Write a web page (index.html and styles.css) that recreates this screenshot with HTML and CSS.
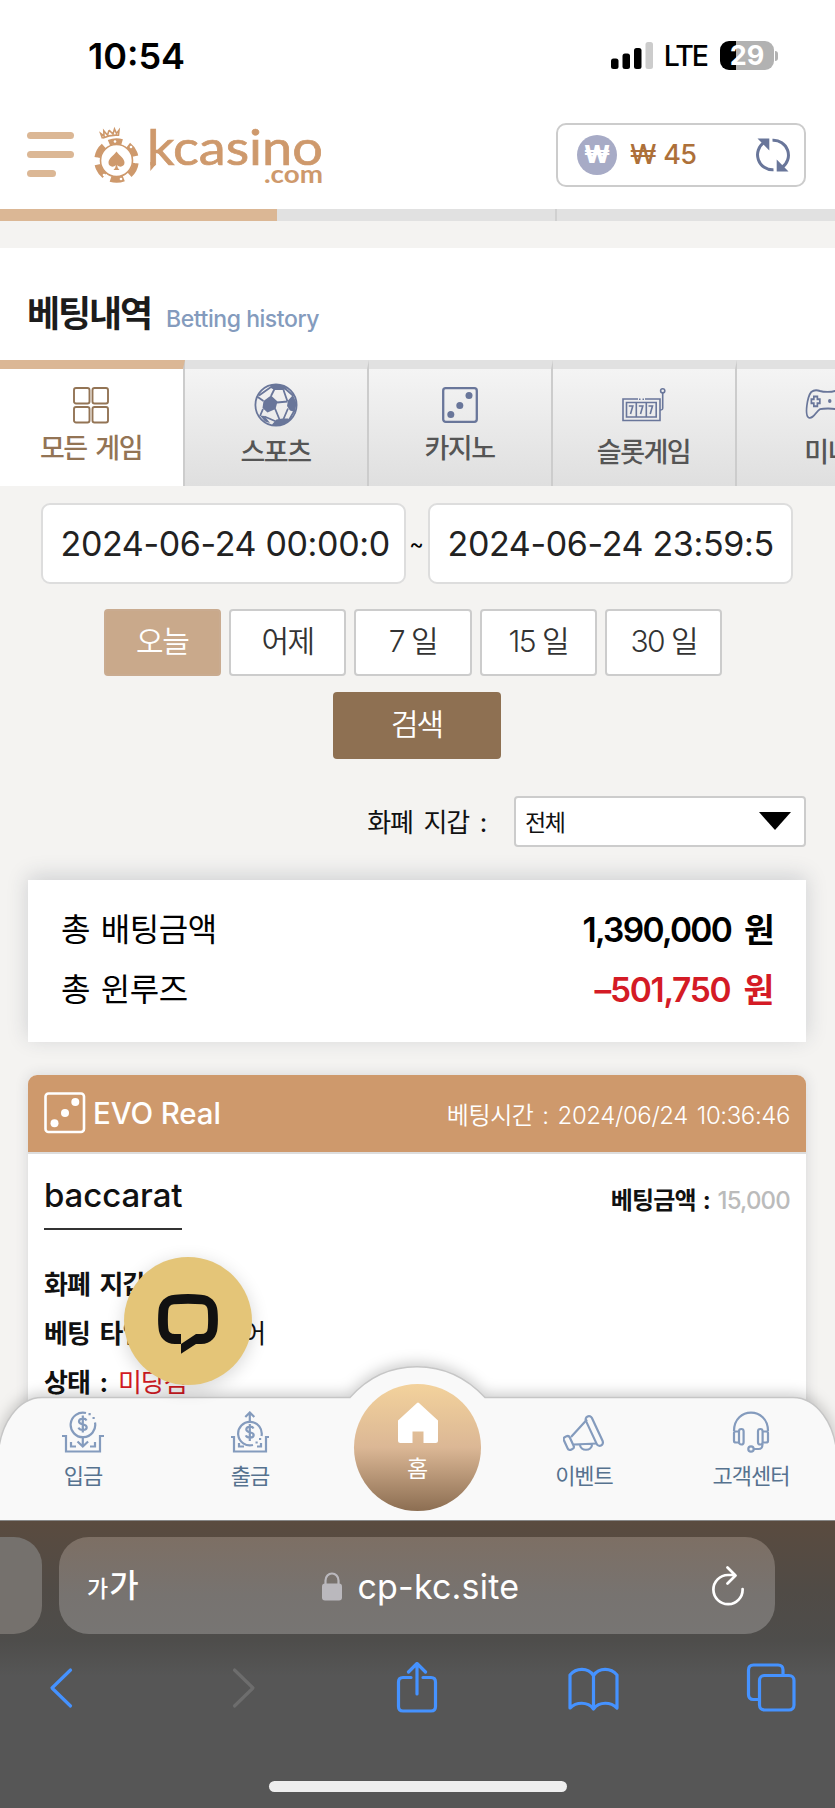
FILE: index.html
```html
<!DOCTYPE html>
<html lang="ko">
<head>
<meta charset="utf-8">
<title>베팅내역</title>
<link rel="stylesheet" href="styles.css">
</head>
<body>
<div class="screen">
  <div class="status">
    <span class="clock">10:54</span>
    <div class="status-right">
      <svg class="signal" width="42" height="28" viewBox="0 0 42 28"><rect x="0" y="16.500" width="7.500" height="10.500" rx="2.500"/><rect x="11.500" y="11.500" width="7.500" height="15.500" rx="2.500"/><rect x="23" y="6" width="7.500" height="21" rx="2.500"/><rect x="34.500" y="0" width="7.500" height="27" rx="2.500" fill="#ccc"/></svg>
      <span class="lte">LTE</span>
      <span class="battery">29</span>
      <span class="battery-tip"></span>
    </div>
  </div>

  <header class="header">
    <div class="menu"><i></i><i></i><i class="short"></i></div>
    <svg class="logo" width="232" height="60" viewBox="0 0 232 60">
      <g fill="none" stroke="#ce996c">
        <circle cx="23.500" cy="35.500" r="16" stroke-width="1.600"/>
        <circle cx="23.500" cy="35.500" r="19.300" stroke-width="6" stroke-dasharray="13.300 6.910" transform="rotate(-113 23.500 35.500)"/>
      </g>
      <g fill="#fff"><circle cx="22" cy="16.500" r="1.300"/><circle cx="38" cy="22" r="1.300"/><circle cx="42.500" cy="37" r="1.300"/><circle cx="28" cy="54" r="1.300"/><circle cx="11" cy="50" r="1.300"/><circle cx="4.500" cy="34" r="1.300"/></g>
      <path d="M23.500 26.500c3 4.500 8 6.500 8 11.300 0 4-5 5.200-7.300 2.200.2 2 .6 3.500 2.300 5h-6c1.700-1.500 2.100-3 2.300-5-2.300 3-7.300 1.800-7.300-2.200 0-4.800 5-6.800 8-11.300z" fill="#ce996c"/>
      <path d="M9.500 13.500l-1.800-5 3.300 2.500-.2-5.200 3.700 4.500 1.500-5M10 13Q17 9.500 25.500 10.200l.5-5-2.500 3.300-2-4.500-1.500 5-4-3.800" fill="none" stroke="#ce996c" stroke-width="1.600"/>
      <text class="logo-name" x="54" y="39.500" textLength="176" lengthAdjust="spacingAndGlyphs">kcasino</text>
      <path d="M57.300 37h4.700v3.500l-4.700 5.500z" fill="#ce996c"/>
      <text class="logo-com" x="171" y="57.500" textLength="59" lengthAdjust="spacingAndGlyphs">.com</text>
    </svg>
    <div class="wallet">
      <span class="won">₩</span>
      <span class="amount">₩ 45</span>
      <svg width="36" height="36" viewBox="0 0 36 36" fill="none" stroke="#69769a" stroke-width="3"><path d="M18.500 32.800A15 15 0 0 1 9 5.500M17.500 3.200A15 15 0 0 1 27 30.500"/><path d="M2.500 1.500h11.800v12zM33.500 34.500H21.700v-12z" fill="#69769a" stroke="none"/></svg>
    </div>
  </header>

  <div class="topbar"><i class="on"></i><i></i></div>

  <main class="page">
    <div class="title"><h1>베팅내역</h1><span>Betting history</span></div>
    <nav class="tabs">
      <a class="tab active">
        <svg width="36" height="44" viewBox="0 0 36 44" fill="none" stroke="#937455" stroke-width="1.900"><rect x="1" y="5" width="15.500" height="15.500" rx="2"/><rect x="19.500" y="5" width="15.500" height="15.500" rx="2"/><rect x="1" y="24" width="15.500" height="15.500" rx="2"/><rect x="19.500" y="24" width="15.500" height="15.500" rx="2"/></svg>
        <span>모든 게임</span></a>
      <a class="tab low">
        <svg width="44" height="44" viewBox="0 0 44 44" fill="none" stroke="#69769a" stroke-width="1.800"><circle cx="22" cy="22" r="20.600"/><path d="M9.500 18l7.500-5.500 6.500 6-2 7.500-8 3.500-5-4.500zM17 2h12l4 3.500-3.500 1.500h-9L16 4.500zM34 17.500l5-5.500 3.500 8-1.500 9-5-1.500-3-4.500zM22.500 36.500l6-1h5.500l2 1.500-6 4.500-10 1.500-2-1.500zM6 32.500l4.500.5 5.500 7-5-1.500z" fill="#69769a" stroke="none"/><path d="M17 13l3.500-7M23 19.500l10.500-1M33.500 18.500L29.500 7M21 25.500l4.500 11M34 25.500L29.500 36M9.500 18L3 13.500M9 26L6 33M31 5.500l8.500 7.500M35 37l5.500-9.500M10.500 33.500L22 38.500M5 12.500L17 4"/></svg>
        <span>스포츠</span></a>
      <a class="tab">
        <svg width="36" height="44" viewBox="0 0 36 44"><rect x="1.200" y="5.200" width="33.600" height="33.600" rx="2.500" fill="none" stroke="#69769a" stroke-width="2.300"/><g fill="#69769a"><circle cx="27" cy="12.500" r="3.500"/><circle cx="17.800" cy="22.500" r="3.500"/><circle cx="8.800" cy="31.500" r="3.500"/></g></svg>
        <span>카지노</span></a>
      <a class="tab low">
        <svg width="44" height="44" viewBox="0 0 44 44" fill="none" stroke="#69769a" stroke-width="1.600"><path d="M16 16H1v21.500h37V16H23"/><path d="M4.500 19.500h29.700V34H4.500zM14.300 19.500V34M24.300 19.500V34M17 16.300h1.500M20.500 16.300H22M38 27c2.500 0 2.700-.5 2.700-2V10"/><circle cx="40.700" cy="7.800" r="2.100"/><path d="M6.800 23h4l-2.300 8M16.800 23h4l-2.300 8M26.500 23h4l-2.300 8"/></svg>
        <span>슬롯게임</span></a>
      <a class="tab low">
        <svg width="46" height="44" viewBox="0 0 52 44" preserveAspectRatio="none" fill="none" stroke="#69769a" stroke-width="1.900"><path d="M7 9c4-3 7-2 10-1 4 1.200 13 1.200 17 0 4-1.200 7-2 10 1 4 5 7 22 4 25-5 3-10-7-13-7.800-4-1-14-1-18 0-4 1.500-8 10.800-13 8.300C-.5 32 2.500 14 7 9z"/><path d="M10 13.500h4v2.800h2.800v4H14v2.900h-4v-2.900H7.200v-4H10z"/><circle cx="28" cy="18" r="1"/><circle cx="38" cy="18" r="3"/></svg>
        <span>미니</span></a>
    </nav>

    <section class="filters">
      <div class="dates"><div class="date">2024-06-24 00:00:0</div><span class="tilde">~</span><div class="date">2024-06-24 23:59:5</div></div>
      <div class="ranges"><button class="range sel">오늘</button><button class="range">어제</button><button class="range">7 일</button><button class="range">15 일</button><button class="range">30 일</button></div>
      <button class="search">검색</button>
      <div class="currency"><label>화폐 지갑 :</label><div class="select"><span>전체</span><svg width="32" height="18" viewBox="0 0 32 18"><path d="M0 0h32L16 18z"/></svg></div></div>
    </section>

    <section class="summary">
      <div><span>총 배팅금액</span><b>1,390,000 원</b></div>
      <div><span>총 윈루즈</span><b class="neg">–501,750 원</b></div>
    </section>

    <section class="card">
      <div class="card-head">
        <svg width="42" height="42" viewBox="0 0 42 42"><rect x="1.500" y="1.500" width="38.500" height="38.500" rx="3" fill="none" stroke="#fff" stroke-width="2.600"/><g fill="#fff"><circle cx="31.300" cy="10" r="4"/><circle cx="21" cy="21" r="4"/><circle cx="10.500" cy="31.300" r="4"/></g></svg>
        <span class="vendor">EVO Real</span>
        <span class="time">베팅시간 : 2024/06/24 10:36:46</span>
      </div>
      <div class="card-top"><span class="game">baccarat</span><span class="bet"><b>베팅금액 :</b> 15,000</span></div>
      <div class="rows">
        <div><b>화폐 지갑 :</b> KRW</div>
        <div><b>베팅 타입 :</b> 플레이어</div>
        <div><b>상태 :</b> <em>미당첨</em></div>
      </div>
    </section>
  </main>

  <div class="dock">
    <svg class="dock-shape" width="835" height="180" viewBox="0 0 835 180"><path d="M-2 122C-2 82 20 57.500 42 57.500H350C368 37 391 26.700 417 26.700S466 37 485 57.500H793C815 57.500 837 82 837 122V182H-2z" fill="#f9f9f9" stroke="#c6c6c6" stroke-width="1.400"/></svg>
    <div class="dock-items">
      <a class="item"><svg width="42" height="42" viewBox="0 0 42 42" fill="none" stroke="#849bbd" stroke-width="2.200"><path d="M24 2A12.300 12.300 0 1 0 33 11.500" /><path d="M24.500 9.500c-1-2.500-7.500-2.500-7.500 1 0 4 7.700 1.700 7.700 5.800 0 3.600-7 3.500-8.200.4M20.800 4.500v17M20.800 25v10M15.500 30.500l5.300 5 5.300-5" /><path d="M0 25h4v15.500h34V25h4M9 31v4.500h5M33 31v4.500h-5M26.500 3.200h2.200M30.500 7h2.200"/></svg><span>입금</span></a>
      <a class="item"><svg width="42" height="42" viewBox="0 0 42 42" fill="none" stroke="#849bbd" stroke-width="2.200"><path d="M32.500 25A11.800 11.800 0 1 0 24 34"/><path d="M24.500 17.500c-1-2.500-7.200-2.500-7.200 1 0 3.700 7.400 1.700 7.400 5.500 0 3.400-6.700 3.300-7.900.4M20.800 13v17M20.800 11V2M16.300 6l4.500-4.500 4.500 4.500"/><path d="M2 26h3v14.500h32V26h3M10 32v3.500h5M32 32v3.500h-4M26.500 31.500h2.200M30 28h2.200"/></svg><span>출금</span></a>
      <a class="home"><svg width="42" height="42" viewBox="0 0 42 42"><path d="M20 1Q21 0 22 1L41 18.500V38.500Q41 41 38.500 41H26.500V29.500H15.500V41H3.500Q1 41 1 38.500V18.500z" fill="#fff"/></svg><span>홈</span></a>
      <a class="item"><svg width="42" height="42" viewBox="0 0 42 42" fill="none" stroke="#849bbd" stroke-width="2.200"><rect x="28" y="4" width="6.600" height="32" rx="3.300" transform="rotate(-25 31.200 20)"/><rect x="2.500" y="25" width="6.500" height="14" rx="2.500" transform="rotate(-25 5.700 32)"/><path d="M8 26L24 8.500M10.500 33.500L34 32.500M17 33.500c0 7 12 7 12 0"/></svg><span>이벤트</span></a>
      <a class="item"><svg width="42" height="42" viewBox="0 0 42 42" fill="none" stroke="#849bbd" stroke-width="2.200"><path d="M4 20C4-4.500 38-4.500 38 20M9 20.500H5.500C4 20.500 4 21 4 22v8c0 1 1 1.500 2 1.500h3M33 20.500h3.500c1.500 0 1.500.5 1.500 1.500v8c0 1-1 1.500-2 1.500h-3M32.500 33c0 4-1 5-4 5H24"/><rect x="9" y="18" width="4.600" height="15.500" rx="2.300"/><rect x="28" y="18" width="4.600" height="15.500" rx="2.300"/><circle cx="21" cy="38" r="2.700"/></svg><span>고객센터</span></a>
    </div>
  </div>

  <div class="chat"><svg width="60" height="60" viewBox="0 0 60 60"><path fill-rule="evenodd" fill="#111" d="M17 .7Q30-.7 43 .7C53 1.500 59 8 59.500 17Q60.300 26 59.500 33.500C59 43 53 50 43 50H38L23 59.800V50H17C7 50 1 43 .5 33.500Q-.3 26 .5 17C1 8 7 1.500 17 .7zM16 10.300Q10.500 10.700 10.200 16.500Q9.500 26 10.200 34Q10.500 40 17 40H23V50L38 40H43Q49.500 40 49.800 34Q50.500 26 49.800 16.500Q49.500 10.700 44 10.300Q30 9.300 16 10.300z"/></svg></div>

  <footer class="browser">
    <div class="urls">
      <div class="prev"></div>
      <div class="url">
        <span class="aa"><small>가</small>가</span>
        <span class="host"><svg width="20" height="29" viewBox="0 0 20 29"><path d="M3.500 13V8.500a6.500 7 0 0 1 13 0V13" fill="none" stroke="#bab8bd" stroke-width="2.200"/><rect y="11.500" width="20" height="17" rx="3" fill="#bab8bd"/></svg>cp-kc.site</span>
        <svg width="34" height="40" viewBox="0 0 34 40" fill="none" stroke="#fff" stroke-width="2.700" stroke-linecap="round" stroke-linejoin="round"><path d="M16.500 1.500l8 8-8 8M24 9H17A14.600 14.600 0 1 0 31.600 23"/></svg>
      </div>
    </div>
    <div class="tools">
      <svg width="52" height="52" viewBox="0 0 52 52"><path d="M35.500 8L17 26l18.500 18"/></svg>
      <svg class="dim" width="52" height="52" viewBox="0 0 52 52"><path d="M22.500 8L41 26 22.500 44"/></svg>
      <svg width="52" height="52" viewBox="-6 0 52 52"><path d="M15 15.500H7q-4.500 0-4.500 4.500v24.500q0 4.500 4.500 4.500h28q4.500 0 4.500-4.500V20q0-4.500-4.500-4.500h-8M21 32V2M12.500 10L21 1.500 29.500 10"/></svg>
      <svg width="52" height="52" viewBox="0 0 52 52"><path d="M26.500 13.500C20.500 5 9 6 3 13V46c6-6 17.500-7 23.500 1 6-8 17.500-7 23.500-1V13C44 6 32.500 5 26.500 13.500zV46"/></svg>
      <svg width="52" height="52" viewBox="-2 -1 52 52"><path d="M13 36.500H7.500q-5 0-5-5V7q0-5 5-5h24.500q5 0 5 5v5.500"/><rect x="13.500" y="12.500" width="34.500" height="34.500" rx="5"/></svg>
    </div>
    <div class="indicator"></div>
  </footer>
</div>
</body>
</html>
```

FILE: styles.css
```css
* { box-sizing: border-box; }
body { margin: 0; font-family: Inter, "Noto Sans CJK KR", sans-serif; color: #111; }
h1 { margin: 0; }
i, em { font-style: normal; }
b { font-weight: 600; }
button { font-family: inherit; margin: 0; padding: 0; }
svg { display: block; flex: none; }
.screen { position: relative; width: 835px; height: 1808px; overflow: hidden; background: #fff; display: flex; flex-direction: column; white-space: nowrap; }

.status { height: 104px; padding: 7px 57px 0 88px; display: flex; justify-content: space-between; align-items: center; color: #000; }
.clock { font-size: 36px; font-weight: 600; letter-spacing: 0; line-height: 104px; }
.status-right { display: flex; align-items: center; }
.lte { font-size: 28.500px; font-weight: 500; margin-left: 11px; letter-spacing: -2px; }
.battery { width: 54px; height: 29px; margin-left: 13px; border-radius: 9px; background: linear-gradient(90deg, #000 16px, #b2b2b2 16px); color: #fff; font-size: 27px; font-weight: 700; line-height: 29px; text-align: center; }
.battery-tip { width: 3px; height: 10px; margin-left: 1px; border-radius: 0 4px 4px 0; background: #b2b2b2; }

.header { height: 105px; padding: 0 29px 4px 27px; display: flex; align-items: center; }
.menu { width: 46.500px; display: flex; flex-direction: column; gap: 12.500px; }
.menu i { height: 6.700px; border-radius: 4px; background: #dbb795; }
.menu .short { width: 29px; }
.logo { margin-left: 19px; overflow: visible; }
.logo text { fill: #ce996c; font-family: Lato, sans-serif; }
.logo-name { font-size: 48px; font-weight: 400; stroke: #ce996c; stroke-width: .7px; }
.logo-com { font-size: 25px; font-weight: 700; }
.wallet { width: 250px; height: 64px; margin-left: auto; padding: 0 13px 0 19px; border: 2px solid #ccc; border-radius: 10px; display: flex; align-items: center; }
.won { width: 40px; height: 40px; border-radius: 50%; background: #a7abc6; color: #fff; font-size: 24px; font-weight: 900; line-height: 40px; text-align: center; }
.amount { flex: 1; margin-left: 13px; font-size: 27px; font-weight: 500; letter-spacing: -.7px; word-spacing: 1px; color: #ad7039; }

.topbar { flex: none; height: 12px; display: grid; grid-template-columns: 277px 280px; background: #e1e1e1; }
.topbar i { border-right: 2px solid #d0d0d0; }
.topbar .on { background: #dbb795; border-color: #dbb795; }
.page { flex: 1; min-height: 0; padding-top: 27px; background: #f4f3f1; overflow: hidden; }
.title { height: 112px; padding: 0 27px; background: #fff; display: flex; }
.title h1 { font-size: 36px; line-height: 133px; font-weight: 700; letter-spacing: -2.100px; color: #1c1c1c; }
.title span { margin-left: 15px; font-size: 23px; font-weight: 500; line-height: 143px; letter-spacing: -.45px; color: #849bbd; }

.tabs { height: 126px; display: flex; overflow: hidden; }
.tab { flex: none; width: 184px; padding: 14px 1px 0 0; border-top: 9px solid #e1e1e1; border-right: 2px solid #ccc; background: linear-gradient(#f4f4f4, #dfdfdf); display: flex; flex-direction: column; align-items: center; color: #555; }
.tab span { margin-top: 2px; font-size: 27px; line-height: 40px; font-weight: 500; letter-spacing: -1.500px; word-spacing: 3px; }
.tab.low span { margin-top: 6px; }
.tab.active { width: 185px; background: #fff; border-top-color: #dbb795; color: #937455; }

.filters { display: flex; flex-direction: column; align-items: center; padding-right: 2px; }
.dates { display: flex; align-items: center; margin-top: 17px; }
.date { width: 365px; height: 81px; padding: 0 18px; border: 2px solid #ddd; border-radius: 9px; background: #fff; font-size: 34px; letter-spacing: -.35px; line-height: 78px; color: #222; }
.tilde { width: 22px; text-align: center; font-size: 22px; color: #000; }
.ranges { display: flex; gap: 8px; margin: 25px 7px 0 0; }
.range { width: 117.400px; height: 67px; padding-bottom: 7px; border: 2px solid #ccc; border-radius: 4px; background: #fff; color: #333; font-size: 30px; font-weight: 350; letter-spacing: -1.500px; }
.range.sel { background: #c9a98b; border-color: #c9ab90; color: #fff; }
.search { width: 168px; height: 67px; margin-top: 16px; padding-bottom: 7px; border: 0; border-radius: 4px; background: #8e7052; color: #fff; font-size: 30px; font-weight: 350; letter-spacing: -2px; }
.currency { align-self: stretch; display: flex; justify-content: flex-end; align-items: center; margin: 37px 27px 0 0; color: #111; }
.currency label { font-size: 26px; letter-spacing: -1.300px; word-spacing: 5px; margin-right: 28px; padding-bottom: 3px; }
.select { width: 292px; height: 51px; padding: 0 13px 2px 9px; border: 2px solid #ccc; border-radius: 4px; background: #fff; display: flex; align-items: center; justify-content: space-between; font-size: 23px; letter-spacing: -1.300px; }

.summary { margin: 33px 29px 0 28px; height: 162px; padding: 20px 33px; background: #fff; box-shadow: 0 -4px 20px rgba(40, 50, 70, .18); color: #000; }
.summary div { display: flex; justify-content: space-between; line-height: 60px; }
.summary span { font-size: 32px; letter-spacing: -.4px; word-spacing: 2px; }
.summary b { font-size: 33.500px; letter-spacing: -1.700px; word-spacing: 6px; }
.summary .neg { color: #d41b25; letter-spacing: -1.300px; }

.card { margin: 33px 29px 0 28px; height: 500px; border-radius: 9px 9px 0 0; background: #fff; box-shadow: 0 0 14px rgba(40, 50, 70, .14); }
.card-head { height: 79px; padding: 0 16px 1px; border-bottom: 2px solid #ddd; border-radius: 9px 9px 0 0; background: #ce996c; background-clip: padding-box; color: #fff; display: flex; align-items: center; }
.vendor { margin-left: 7px; font-size: 29.500px; font-weight: 550; letter-spacing: -.1px; }
.time { margin-left: auto; font-size: 24px; font-weight: 350; letter-spacing: -.4px; word-spacing: 2.500px; }
.card-top { padding: 22px 16px 0; display: flex; justify-content: space-between; }
.game { height: 54px; border-bottom: 2px solid #333; font-size: 33px; line-height: 39px; font-weight: 500; letter-spacing: -.1px; }
.bet { font-size: 24px; line-height: 50px; font-weight: 500; color: #bbb; letter-spacing: -.8px; word-spacing: 2px; }
.bet b { color: #111; font-weight: 700; }
.rows { padding: 30px 16px 0; font-size: 26px; line-height: 49px; letter-spacing: -1px; word-spacing: 4.500px; }
.rows b { font-weight: 700; }
.rows em { color: #d41b25; }

.dock { position: absolute; left: 0; top: 1340px; width: 835px; height: 180px; overflow: hidden; }
.dock-shape { position: absolute; left: 0; top: 0; filter: drop-shadow(0 -3px 7px rgba(0, 0, 0, .2)); }
.dock-items { position: relative; display: grid; grid-template-columns: repeat(5, 167px); padding-top: 44px; }
.item { padding: 27px 1px 0 0; display: flex; flex-direction: column; align-items: center; color: #56728f; font-size: 22px; line-height: 32px; letter-spacing: -1px; }
.item span { margin-top: 7px; }
.home { justify-self: center; width: 127px; height: 127px; padding-top: 18px; border-radius: 50%; background: linear-gradient(#f3d29c, #dbb795 50%, #8c6e52); display: flex; flex-direction: column; align-items: center; color: #fff; font-size: 23px; line-height: 32px; }
.home span { margin-top: 9px; }

.chat { position: absolute; left: 124px; top: 1257px; width: 128px; height: 128px; border-radius: 50%; background: #e4c578; box-shadow: 0 4px 18px rgba(0, 0, 0, .16); display: flex; justify-content: center; padding-top: 37px; }

.browser { position: relative; height: 288px; border-top: 1px solid #888; background: linear-gradient(#5a4b3f, #504b46 70px, #4e4d4b 120px, #565656 155px); color: #fff; }
.urls { padding-top: 16px; display: flex; gap: 17px; }
.prev { width: 42px; height: 97px; border-radius: 0 28px 28px 0; background: #75716d; }
.url { width: 716px; height: 97px; padding: 0 30px 0 28px; border-radius: 30px; background: linear-gradient(#7d6f64, #777370 60%, #777573); display: flex; align-items: center; justify-content: space-between; }
.aa { padding-top: 4px; font-size: 32px; font-weight: 500; line-height: 50px; }
.aa small { font-size: 23px; margin-right: 1px; }
.host { display: flex; align-items: center; gap: 15px; padding-top: 2px; font-size: 34px; letter-spacing: .2px; margin-right: 8px; }
.tools { height: 52px; margin-top: 28px; padding: 0 39px 0 35px; display: flex; justify-content: space-between; }
.tools svg { fill: none; stroke: #4592ff; stroke-width: 3.200; stroke-linecap: round; stroke-linejoin: round; }
.tools .dim { stroke: #6d6d6d; }
.indicator { width: 298px; height: 11px; margin: 67px auto 0; border-radius: 6px; background: #eee; }
```
